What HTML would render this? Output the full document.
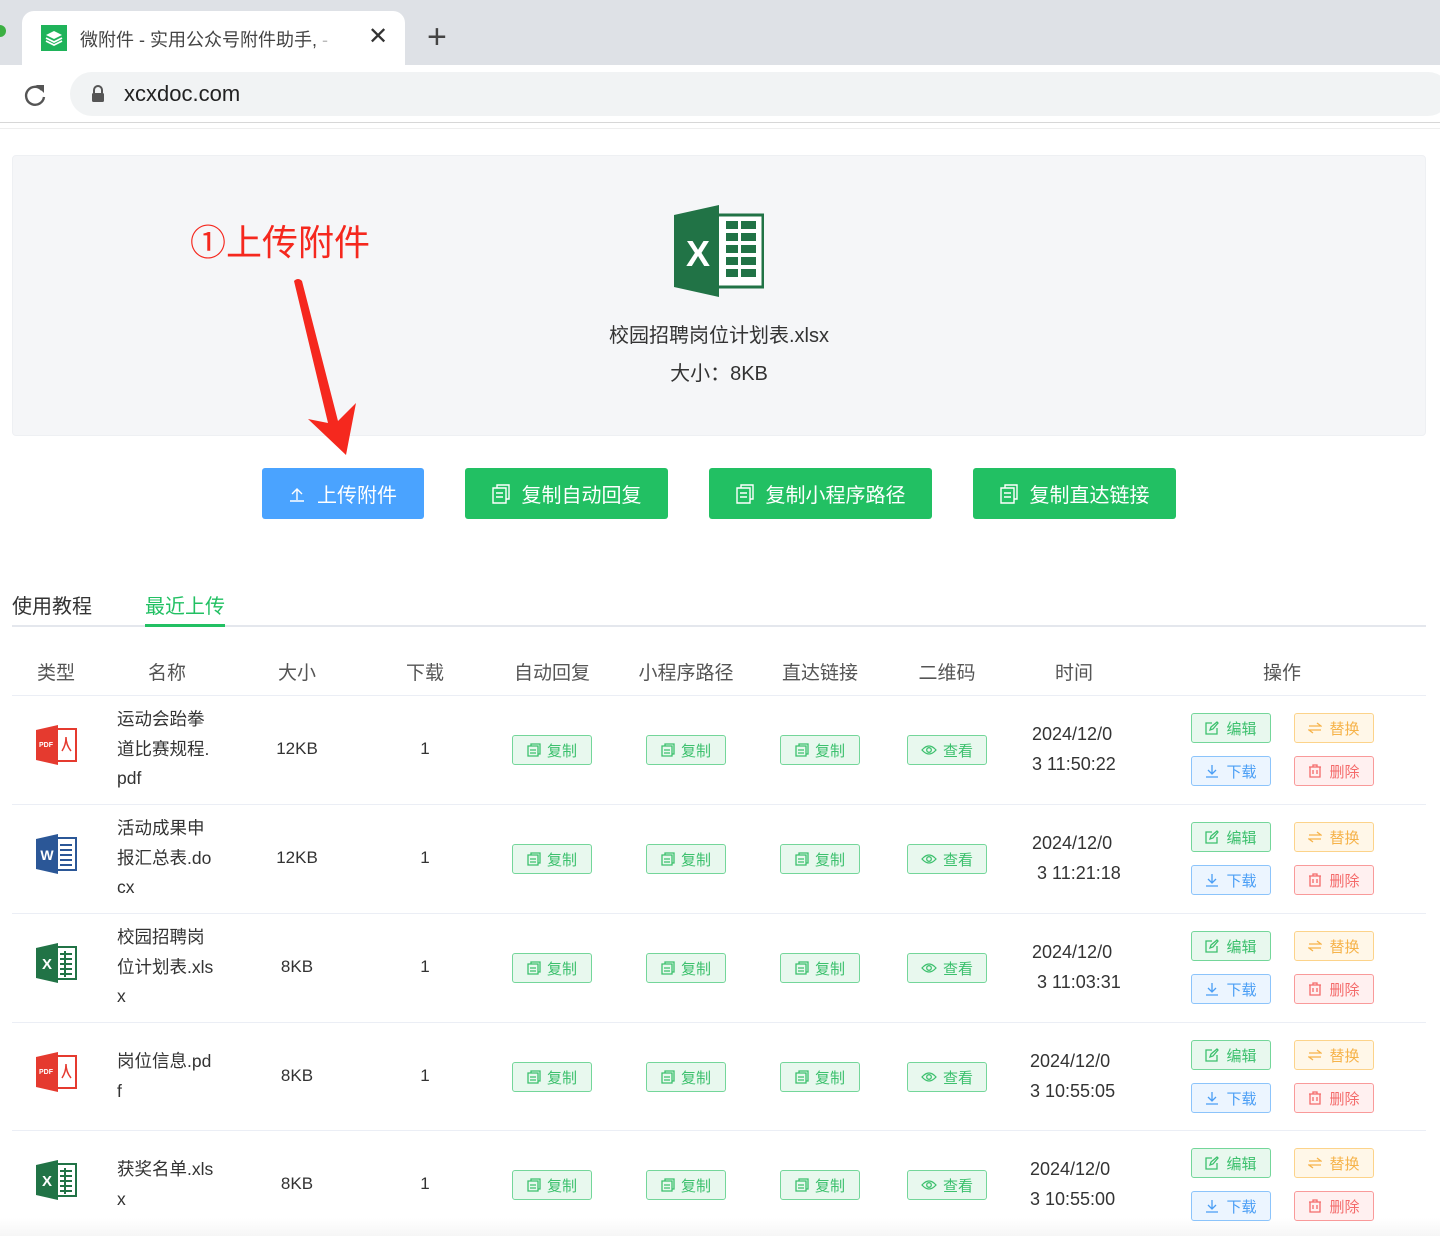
<!DOCTYPE html>
<html><head><meta charset="utf-8">
<style>
*{margin:0;padding:0;box-sizing:border-box}
body{width:1440px;height:1236px;position:relative;overflow:hidden;background:#fff;font-family:"Liberation Sans","Noto Sans CJK SC",sans-serif;color:#333}
.a{position:absolute}
.tc{transform:translateX(-50%);white-space:nowrap}
.hd{font-size:19px;color:#555;top:658px}
.sb{position:absolute;width:80px;height:30px;border:1px solid #74d69a;background:#e8f8ee;color:#3cc06d;border-radius:3px;font-size:15px;display:flex;align-items:center;justify-content:center;gap:6px}
.ob{position:absolute;width:80px;height:30px;border-radius:3px;font-size:15px;display:flex;align-items:center;justify-content:center;gap:7px}
.g{border:1px solid #74d69a;background:#e8f8ee;color:#3cc06d;left:1191px}
.y{border:1px solid #fcd38a;background:#fff7e8;color:#f6b34a;left:1294px}
.b{border:1px solid #8cc4fb;background:#ecf5ff;color:#4a9ef5;left:1191px}
.r{border:1px solid #f99a9a;background:#fff0f0;color:#f46a6a;left:1294px}
.nm{position:absolute;left:117px;font-size:17.5px;line-height:29.5px;color:#333}
.cell{position:absolute;font-size:17px;color:#333;transform:translate(-50%,-50%);white-space:nowrap}
.tm{position:absolute;left:1032px;font-size:18px;line-height:29.5px;color:#333}
.sep{position:absolute;left:12px;width:1414px;height:1px;background:#ebeef5}
.big{position:absolute;top:468px;height:51px;border-radius:3px;color:#fff;font-size:20px;display:flex;align-items:center;justify-content:center;gap:12px}
svg.i{fill:none;stroke:currentColor;stroke-width:1.3}
</style></head><body>
<svg width="0" height="0" style="position:absolute"></svg>
<!-- browser chrome -->
<div class="a" style="left:0;top:0;width:1440px;height:65px;background:#dee1e6"></div>
<div class="a" style="left:0;top:25px;width:6px;height:12px;border-radius:0 6px 6px 0;background:#3cb043"></div>
<div class="a" style="left:22px;top:11px;width:383px;height:56px;background:#fff;border-radius:12px 12px 0 0"></div>
<div class="a" style="left:41px;top:25px;width:26px;height:26px;background:#1fb35a;display:flex;align-items:center;justify-content:center">
<svg width="18" height="16" viewBox="0 0 18 16"><path d="M9 1 L17 5 L9 9 L1 5Z" fill="#fff"/><path d="M1 8 L9 12 L17 8" stroke="#fff" stroke-width="1.8" fill="none"/><path d="M1 11 L9 15 L17 11" stroke="#fff" stroke-width="1.8" fill="none"/></svg></div>
<div class="a" style="left:80px;top:26px;font-size:18px;color:#444;white-space:nowrap">微附件 - 实用公众号附件助手,<span style="color:#bbb"> -</span></div>
<div class="a" style="left:368px;top:22px;font-size:24px;color:#333">✕</div>
<div class="a" style="left:427px;top:18px;font-size:34px;color:#444;font-weight:300">+</div>
<div class="a" style="left:0;top:65px;width:1440px;height:58px;background:#fff"></div>
<svg class="a" style="left:22px;top:82px" width="26" height="26" viewBox="0 0 26 26"><path d="M20 8 A9 9 0 1 0 22 15" stroke="#555" stroke-width="2.4" fill="none"/><path d="M14 3 L22 3 L22 11Z" fill="#555"/></svg>
<div class="a" style="left:70px;top:72px;width:1380px;height:44px;border-radius:22px;background:#f1f3f4"></div>
<svg class="a" style="left:91px;top:85px" width="14" height="18" viewBox="0 0 14 18"><path d="M3 8 V5 A4 4 0 0 1 11 5 V8" stroke="#555" stroke-width="2" fill="none"/><rect x="1" y="8" width="12" height="9" rx="1.5" fill="#555"/></svg>
<div class="a" style="left:124px;top:81px;font-size:22px;color:#222">xcxdoc.com</div>
<div class="a" style="left:0;top:122px;width:1440px;height:1px;background:#d7d7d7"></div>
<div class="a" style="left:0;top:128px;width:1440px;height:1px;background:#eee"></div>

<!-- preview card -->
<div class="a" style="left:12px;top:155px;width:1414px;height:281px;background:#f5f6f8;border-radius:4px;border:1px solid #eef0f3"></div>
<svg class="a" style="left:674px;top:205px" width="90" height="92" viewBox="0 0 90 92">
<rect x="42" y="10" width="47" height="72" fill="#fff" stroke="#217346" stroke-width="3"/>
<g fill="#217346"><rect x="52" y="16" width="12" height="8"/><rect x="67" y="16" width="15" height="8"/><rect x="52" y="28" width="12" height="8"/><rect x="67" y="28" width="15" height="8"/><rect x="52" y="40" width="12" height="8"/><rect x="67" y="40" width="15" height="8"/><rect x="52" y="52" width="12" height="8"/><rect x="67" y="52" width="15" height="8"/><rect x="52" y="64" width="12" height="8"/><rect x="67" y="64" width="15" height="8"/></g>
<path d="M0 10 L45 0 L45 92 L0 82Z" fill="#217346"/>
<text x="24" y="61" font-family="Liberation Sans" font-weight="bold" font-size="36" fill="#fff" text-anchor="middle">X</text></svg>
<div class="a tc" style="left:719px;top:319px;font-size:20px;color:#333">校园招聘岗位计划表.xlsx</div>
<div class="a tc" style="left:719px;top:357px;font-size:20px;color:#333">大小：8KB</div>
<div class="a" style="left:190px;top:214px;font-size:36px;color:#f5281e;white-space:nowrap">①上传附件</div>
<svg class="a" style="left:290px;top:275px" width="80" height="185" viewBox="0 0 80 185"><path d="M4 6 Q8 2 12 6 L48 146 L66 128 L56 180 L18 144 L38 148Z" fill="#f5281e"/></svg>

<!-- big buttons -->
<div class="big" style="left:262px;width:162px;background:#4aa3ff"><svg width="16" height="16" viewBox="0 0 16 16"><path d="M8 14 V3 M3 8 L8 3 L13 8 M1 15 H15" stroke="#fff" stroke-width="1.4" fill="none"/></svg>上传附件</div>
<div class="big" style="left:465px;width:203px;background:#22c063"><svg width="18" height="20" viewBox="0 0 18 20"><path d="M5 4 V1 H17 V15 H14 M1 4 H14 V19 H1Z M4 9 H11 M4 13 H11" stroke="#fff" stroke-width="1.4" fill="none"/></svg>复制自动回复</div>
<div class="big" style="left:709px;width:223px;background:#22c063"><svg width="18" height="20" viewBox="0 0 18 20"><path d="M5 4 V1 H17 V15 H14 M1 4 H14 V19 H1Z M4 9 H11 M4 13 H11" stroke="#fff" stroke-width="1.4" fill="none"/></svg>复制小程序路径</div>
<div class="big" style="left:973px;width:203px;background:#22c063"><svg width="18" height="20" viewBox="0 0 18 20"><path d="M5 4 V1 H17 V15 H14 M1 4 H14 V19 H1Z M4 9 H11 M4 13 H11" stroke="#fff" stroke-width="1.4" fill="none"/></svg>复制直达链接</div>

<!-- tabs -->
<div class="a" style="left:12px;top:590px;font-size:20px;color:#333">使用教程</div>
<div class="a" style="left:145px;top:590px;font-size:20px;color:#22c063">最近上传</div>
<div class="a" style="left:12px;top:625px;width:1414px;height:2px;background:#e4e7ed"></div>
<div class="a" style="left:145px;top:624px;width:80px;height:3px;background:#22c063"></div>

<!-- header -->
<div class="a tc hd" style="left:56px">类型</div>
<div class="a tc hd" style="left:167px">名称</div>
<div class="a tc hd" style="left:297px">大小</div>
<div class="a tc hd" style="left:425px">下载</div>
<div class="a tc hd" style="left:552px">自动回复</div>
<div class="a tc hd" style="left:686px">小程序路径</div>
<div class="a tc hd" style="left:820px">直达链接</div>
<div class="a tc hd" style="left:947px">二维码</div>
<div class="a tc hd" style="left:1074px">时间</div>
<div class="a tc hd" style="left:1282px">操作</div>
<div class="sep" style="top:695px"></div>
<div class="sep" style="top:804px"></div>
<div class="sep" style="top:913px"></div>
<div class="sep" style="top:1022px"></div>
<div class="sep" style="top:1130px"></div>
<div class="a" style="left:0;top:1218px;width:1440px;height:18px;background:linear-gradient(#fff,#f6f6f6)"></div>

<!-- ROW 1 -->
<svg class="a" style="left:36px;top:725px" width="42" height="40" viewBox="0 0 42 40"><rect x="20" y="4" width="20" height="32" fill="#fff" stroke="#e53a2f" stroke-width="2"/><path d="M26 26 Q30 20 30 12 Q30 20 35 26" stroke="#e53a2f" stroke-width="1.5" fill="none"/><path d="M0 5 L22 0 L22 40 L0 35Z" fill="#e53a2f"/><text x="10" y="22" font-size="7" font-weight="bold" fill="#fff" font-family="Liberation Sans" text-anchor="middle">PDF</text></svg>
<div class="nm" style="top:705px">运动会跆拳<br>道比赛规程.<br>pdf</div>
<div class="cell" style="left:297px;top:749px">12KB</div><div class="cell" style="left:425px;top:749px">1</div>
<div class="sb" style="left:512px;top:735px"><svg class="i" width="14" height="14" viewBox="0 0 14 14"><path d="M4 3V1H13V11H11M1 3H11V13H1ZM3 7H9M3 10H9"/></svg>复制</div><div class="sb" style="left:646px;top:735px"><svg class="i" width="14" height="14" viewBox="0 0 14 14"><path d="M4 3V1H13V11H11M1 3H11V13H1ZM3 7H9M3 10H9"/></svg>复制</div><div class="sb" style="left:780px;top:735px"><svg class="i" width="14" height="14" viewBox="0 0 14 14"><path d="M4 3V1H13V11H11M1 3H11V13H1ZM3 7H9M3 10H9"/></svg>复制</div><div class="sb" style="left:907px;top:735px"><svg class="i" width="16" height="12" viewBox="0 0 16 12"><path d="M1 6Q8 -2 15 6Q8 14 1 6Z"/><circle cx="8" cy="6" r="2.3"/></svg>查看</div>
<div class="tm" style="top:720px">2024/12/0<br>3 11:50:22</div>
<div class="ob g" style="top:713px"><svg class="i" width="14" height="14" viewBox="0 0 14 14"><path d="M7 2H1V13H12V7M5 9L6 6L12 1L13 2L8 8Z"/></svg>编辑</div><div class="ob y" style="top:713px"><svg class="i" width="14" height="12" viewBox="0 0 14 12"><path d="M1 4H13L9 1M13 8H1L5 11"/></svg>替换</div>
<div class="ob b" style="top:756px"><svg class="i" width="14" height="14" viewBox="0 0 14 14"><path d="M7 1V9M3 6L7 10L11 6M1 13H13"/></svg>下载</div><div class="ob r" style="top:756px"><svg class="i" width="14" height="14" viewBox="0 0 14 14"><path d="M1 3H13M5 3V1H9V3M2 3V13H12V3M5 6V10M9 6V10"/></svg>删除</div>

<!-- ROW 2 -->
<svg class="a" style="left:36px;top:834px" width="42" height="40" viewBox="0 0 42 40"><rect x="20" y="4" width="20" height="32" fill="#fff" stroke="#2b5797" stroke-width="2"/><g stroke="#2b5797" stroke-width="2"><path d="M24 11H36M24 16H36M24 21H36M24 26H36M24 31H36"/></g><path d="M0 5 L22 0 L22 40 L0 35Z" fill="#2b5797"/><text x="11" y="26" font-size="14" font-weight="bold" fill="#fff" font-family="Liberation Sans" text-anchor="middle">W</text></svg>
<div class="nm" style="top:814px">活动成果申<br>报汇总表.do<br>cx</div>
<div class="cell" style="left:297px;top:858px">12KB</div><div class="cell" style="left:425px;top:858px">1</div>
<div class="sb" style="left:512px;top:844px"><svg class="i" width="14" height="14" viewBox="0 0 14 14"><path d="M4 3V1H13V11H11M1 3H11V13H1ZM3 7H9M3 10H9"/></svg>复制</div><div class="sb" style="left:646px;top:844px"><svg class="i" width="14" height="14" viewBox="0 0 14 14"><path d="M4 3V1H13V11H11M1 3H11V13H1ZM3 7H9M3 10H9"/></svg>复制</div><div class="sb" style="left:780px;top:844px"><svg class="i" width="14" height="14" viewBox="0 0 14 14"><path d="M4 3V1H13V11H11M1 3H11V13H1ZM3 7H9M3 10H9"/></svg>复制</div><div class="sb" style="left:907px;top:844px"><svg class="i" width="16" height="12" viewBox="0 0 16 12"><path d="M1 6Q8 -2 15 6Q8 14 1 6Z"/><circle cx="8" cy="6" r="2.3"/></svg>查看</div>
<div class="tm" style="top:829px">2024/12/0<br>&nbsp;3 11:21:18</div>
<div class="ob g" style="top:822px"><svg class="i" width="14" height="14" viewBox="0 0 14 14"><path d="M7 2H1V13H12V7M5 9L6 6L12 1L13 2L8 8Z"/></svg>编辑</div><div class="ob y" style="top:822px"><svg class="i" width="14" height="12" viewBox="0 0 14 12"><path d="M1 4H13L9 1M13 8H1L5 11"/></svg>替换</div>
<div class="ob b" style="top:865px"><svg class="i" width="14" height="14" viewBox="0 0 14 14"><path d="M7 1V9M3 6L7 10L11 6M1 13H13"/></svg>下载</div><div class="ob r" style="top:865px"><svg class="i" width="14" height="14" viewBox="0 0 14 14"><path d="M1 3H13M5 3V1H9V3M2 3V13H12V3M5 6V10M9 6V10"/></svg>删除</div>

<!-- ROW 3 -->
<svg class="a" style="left:36px;top:943px" width="42" height="40" viewBox="0 0 42 40"><rect x="20" y="4" width="20" height="32" fill="#fff" stroke="#217346" stroke-width="2"/><g stroke="#217346" stroke-width="2"><path d="M24 11H36M24 16H36M24 21H36M24 26H36M24 31H36M29 8V34"/></g><path d="M0 5 L22 0 L22 40 L0 35Z" fill="#217346"/><text x="11" y="26" font-size="15" font-weight="bold" fill="#fff" font-family="Liberation Sans" text-anchor="middle">X</text></svg>
<div class="nm" style="top:923px">校园招聘岗<br>位计划表.xls<br>x</div>
<div class="cell" style="left:297px;top:967px">8KB</div><div class="cell" style="left:425px;top:967px">1</div>
<div class="sb" style="left:512px;top:953px"><svg class="i" width="14" height="14" viewBox="0 0 14 14"><path d="M4 3V1H13V11H11M1 3H11V13H1ZM3 7H9M3 10H9"/></svg>复制</div><div class="sb" style="left:646px;top:953px"><svg class="i" width="14" height="14" viewBox="0 0 14 14"><path d="M4 3V1H13V11H11M1 3H11V13H1ZM3 7H9M3 10H9"/></svg>复制</div><div class="sb" style="left:780px;top:953px"><svg class="i" width="14" height="14" viewBox="0 0 14 14"><path d="M4 3V1H13V11H11M1 3H11V13H1ZM3 7H9M3 10H9"/></svg>复制</div><div class="sb" style="left:907px;top:953px"><svg class="i" width="16" height="12" viewBox="0 0 16 12"><path d="M1 6Q8 -2 15 6Q8 14 1 6Z"/><circle cx="8" cy="6" r="2.3"/></svg>查看</div>
<div class="tm" style="top:938px">2024/12/0<br>&nbsp;3 11:03:31</div>
<div class="ob g" style="top:931px"><svg class="i" width="14" height="14" viewBox="0 0 14 14"><path d="M7 2H1V13H12V7M5 9L6 6L12 1L13 2L8 8Z"/></svg>编辑</div><div class="ob y" style="top:931px"><svg class="i" width="14" height="12" viewBox="0 0 14 12"><path d="M1 4H13L9 1M13 8H1L5 11"/></svg>替换</div>
<div class="ob b" style="top:974px"><svg class="i" width="14" height="14" viewBox="0 0 14 14"><path d="M7 1V9M3 6L7 10L11 6M1 13H13"/></svg>下载</div><div class="ob r" style="top:974px"><svg class="i" width="14" height="14" viewBox="0 0 14 14"><path d="M1 3H13M5 3V1H9V3M2 3V13H12V3M5 6V10M9 6V10"/></svg>删除</div>

<!-- ROW 4 -->
<svg class="a" style="left:36px;top:1052px" width="42" height="40" viewBox="0 0 42 40"><rect x="20" y="4" width="20" height="32" fill="#fff" stroke="#e53a2f" stroke-width="2"/><path d="M26 26 Q30 20 30 12 Q30 20 35 26" stroke="#e53a2f" stroke-width="1.5" fill="none"/><path d="M0 5 L22 0 L22 40 L0 35Z" fill="#e53a2f"/><text x="10" y="22" font-size="7" font-weight="bold" fill="#fff" font-family="Liberation Sans" text-anchor="middle">PDF</text></svg>
<div class="nm" style="top:1047px">岗位信息.pd<br>f</div>
<div class="cell" style="left:297px;top:1076px">8KB</div><div class="cell" style="left:425px;top:1076px">1</div>
<div class="sb" style="left:512px;top:1062px"><svg class="i" width="14" height="14" viewBox="0 0 14 14"><path d="M4 3V1H13V11H11M1 3H11V13H1ZM3 7H9M3 10H9"/></svg>复制</div><div class="sb" style="left:646px;top:1062px"><svg class="i" width="14" height="14" viewBox="0 0 14 14"><path d="M4 3V1H13V11H11M1 3H11V13H1ZM3 7H9M3 10H9"/></svg>复制</div><div class="sb" style="left:780px;top:1062px"><svg class="i" width="14" height="14" viewBox="0 0 14 14"><path d="M4 3V1H13V11H11M1 3H11V13H1ZM3 7H9M3 10H9"/></svg>复制</div><div class="sb" style="left:907px;top:1062px"><svg class="i" width="16" height="12" viewBox="0 0 16 12"><path d="M1 6Q8 -2 15 6Q8 14 1 6Z"/><circle cx="8" cy="6" r="2.3"/></svg>查看</div>
<div class="tm" style="top:1047px;left:1030px">2024/12/0<br>3 10:55:05</div>
<div class="ob g" style="top:1040px"><svg class="i" width="14" height="14" viewBox="0 0 14 14"><path d="M7 2H1V13H12V7M5 9L6 6L12 1L13 2L8 8Z"/></svg>编辑</div><div class="ob y" style="top:1040px"><svg class="i" width="14" height="12" viewBox="0 0 14 12"><path d="M1 4H13L9 1M13 8H1L5 11"/></svg>替换</div>
<div class="ob b" style="top:1083px"><svg class="i" width="14" height="14" viewBox="0 0 14 14"><path d="M7 1V9M3 6L7 10L11 6M1 13H13"/></svg>下载</div><div class="ob r" style="top:1083px"><svg class="i" width="14" height="14" viewBox="0 0 14 14"><path d="M1 3H13M5 3V1H9V3M2 3V13H12V3M5 6V10M9 6V10"/></svg>删除</div>

<!-- ROW 5 -->
<svg class="a" style="left:36px;top:1160px" width="42" height="40" viewBox="0 0 42 40"><rect x="20" y="4" width="20" height="32" fill="#fff" stroke="#217346" stroke-width="2"/><g stroke="#217346" stroke-width="2"><path d="M24 11H36M24 16H36M24 21H36M24 26H36M24 31H36M29 8V34"/></g><path d="M0 5 L22 0 L22 40 L0 35Z" fill="#217346"/><text x="11" y="26" font-size="15" font-weight="bold" fill="#fff" font-family="Liberation Sans" text-anchor="middle">X</text></svg>
<div class="nm" style="top:1155px">获奖名单.xls<br>x</div>
<div class="cell" style="left:297px;top:1184px">8KB</div><div class="cell" style="left:425px;top:1184px">1</div>
<div class="sb" style="left:512px;top:1170px"><svg class="i" width="14" height="14" viewBox="0 0 14 14"><path d="M4 3V1H13V11H11M1 3H11V13H1ZM3 7H9M3 10H9"/></svg>复制</div><div class="sb" style="left:646px;top:1170px"><svg class="i" width="14" height="14" viewBox="0 0 14 14"><path d="M4 3V1H13V11H11M1 3H11V13H1ZM3 7H9M3 10H9"/></svg>复制</div><div class="sb" style="left:780px;top:1170px"><svg class="i" width="14" height="14" viewBox="0 0 14 14"><path d="M4 3V1H13V11H11M1 3H11V13H1ZM3 7H9M3 10H9"/></svg>复制</div><div class="sb" style="left:907px;top:1170px"><svg class="i" width="16" height="12" viewBox="0 0 16 12"><path d="M1 6Q8 -2 15 6Q8 14 1 6Z"/><circle cx="8" cy="6" r="2.3"/></svg>查看</div>
<div class="tm" style="top:1155px;left:1030px">2024/12/0<br>3 10:55:00</div>
<div class="ob g" style="top:1148px"><svg class="i" width="14" height="14" viewBox="0 0 14 14"><path d="M7 2H1V13H12V7M5 9L6 6L12 1L13 2L8 8Z"/></svg>编辑</div><div class="ob y" style="top:1148px"><svg class="i" width="14" height="12" viewBox="0 0 14 12"><path d="M1 4H13L9 1M13 8H1L5 11"/></svg>替换</div>
<div class="ob b" style="top:1191px"><svg class="i" width="14" height="14" viewBox="0 0 14 14"><path d="M7 1V9M3 6L7 10L11 6M1 13H13"/></svg>下载</div><div class="ob r" style="top:1191px"><svg class="i" width="14" height="14" viewBox="0 0 14 14"><path d="M1 3H13M5 3V1H9V3M2 3V13H12V3M5 6V10M9 6V10"/></svg>删除</div>
</body></html>
